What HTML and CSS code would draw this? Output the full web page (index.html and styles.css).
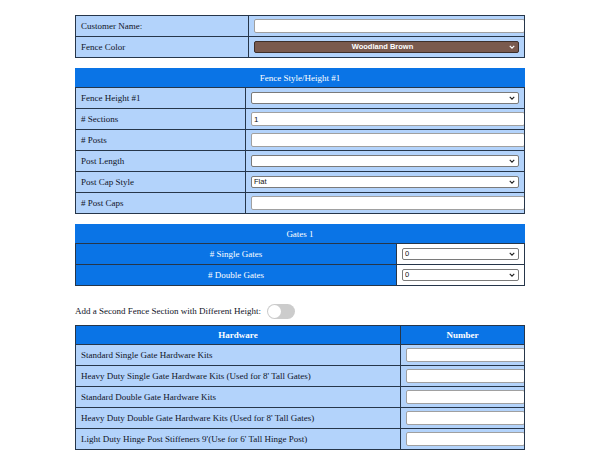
FILE: index.html
```html
<!DOCTYPE html>
<html>
<head>
<meta charset="utf-8">
<link rel="stylesheet" href="styles.css">
</head>
<body>
<div class="page">
  <table class="grid t1">
    <colgroup><col class="k1"><col></colgroup>
    <tr>
      <td class="label">Customer Name:</td>
      <td class="field"><input type="text" class="txt"></td>
    </tr>
    <tr>
      <td class="label">Fence Color</td>
      <td class="field"><span class="selwrap brownwrap"><select class="sel brown"><option>Woodland Brown</option></select><svg class="chev" viewBox="0 0 8 5" width="6" height="4"><path d="M1 1 L4 4 L7 1" fill="none" stroke="#ffffff" stroke-width="1.6"/></svg></span></td>
    </tr>
  </table>

  <table class="grid t2">
    <colgroup><col class="k2"><col></colgroup>
    <tr><th class="head" colspan="2">Fence Style/Height #1</th></tr>
    <tr>
      <td class="label">Fence Height #1</td>
      <td class="field"><span class="selwrap"><select class="sel"><option></option></select><svg class="chev" viewBox="0 0 8 5" width="6" height="4"><path d="M1 1 L4 4 L7 1" fill="none" stroke="#222" stroke-width="1.6"/></svg></span></td>
    </tr>
    <tr>
      <td class="label"># Sections</td>
      <td class="field"><input type="text" class="txt" value="1"></td>
    </tr>
    <tr>
      <td class="label"># Posts</td>
      <td class="field"><input type="text" class="txt"></td>
    </tr>
    <tr>
      <td class="label">Post Length</td>
      <td class="field"><span class="selwrap"><select class="sel"><option></option></select><svg class="chev" viewBox="0 0 8 5" width="6" height="4"><path d="M1 1 L4 4 L7 1" fill="none" stroke="#222" stroke-width="1.6"/></svg></span></td>
    </tr>
    <tr>
      <td class="label">Post Cap Style</td>
      <td class="field"><span class="selwrap"><select class="sel"><option>Flat</option></select><svg class="chev" viewBox="0 0 8 5" width="6" height="4"><path d="M1 1 L4 4 L7 1" fill="none" stroke="#222" stroke-width="1.6"/></svg></span></td>
    </tr>
    <tr>
      <td class="label"># Post Caps</td>
      <td class="field"><input type="text" class="txt"></td>
    </tr>
  </table>

  <table class="grid t3">
    <colgroup><col class="k3"><col></colgroup>
    <tr><th class="head" colspan="2">Gates 1</th></tr>
    <tr>
      <td class="blue"># Single Gates</td>
      <td class="field white"><span class="selwrap"><select class="sel"><option>0</option></select><svg class="chev" viewBox="0 0 8 5" width="6" height="4"><path d="M1 1 L4 4 L7 1" fill="none" stroke="#222" stroke-width="1.6"/></svg></span></td>
    </tr>
    <tr>
      <td class="blue"># Double Gates</td>
      <td class="field white"><span class="selwrap"><select class="sel"><option>0</option></select><svg class="chev" viewBox="0 0 8 5" width="6" height="4"><path d="M1 1 L4 4 L7 1" fill="none" stroke="#222" stroke-width="1.6"/></svg></span></td>
    </tr>
  </table>

  <div class="toggle-row">
    <span class="toggle-label">Add a Second Fence Section with Different Height:</span>
    <span class="switch"><span class="knob"></span></span>
  </div>

  <table class="grid t4">
    <colgroup><col class="k4"><col></colgroup>
    <tr>
      <th class="head bold">Hardware</th>
      <th class="head bold">Number</th>
    </tr>
    <tr>
      <td class="label">Standard Single Gate Hardware Kits</td>
      <td class="field"><input type="text" class="txt"></td>
    </tr>
    <tr>
      <td class="label">Heavy Duty Single Gate Hardware Kits (Used for 8' Tall Gates)</td>
      <td class="field"><input type="text" class="txt"></td>
    </tr>
    <tr>
      <td class="label">Standard Double Gate Hardware Kits</td>
      <td class="field"><input type="text" class="txt"></td>
    </tr>
    <tr>
      <td class="label">Heavy Duty Double Gate Hardware Kits (Used for 8' Tall Gates)</td>
      <td class="field"><input type="text" class="txt"></td>
    </tr>
    <tr>
      <td class="label">Light Duty Hinge Post Stiffeners 9'(Use for 6' Tall Hinge Post)</td>
      <td class="field"><input type="text" class="txt"></td>
    </tr>
  </table>
</div>
</body>
</html>
```
FILE: styles.css
```css
html, body {
  margin: 0;
  padding: 0;
  background: #ffffff;
}

.page {
  width: 450px;
  margin: 15px auto 0;
  font-family: "Liberation Serif", "Times New Roman", serif;
  font-size: 9px;
  color: #101428;
}

.grid {
  width: 100%;
  border-collapse: collapse;
  table-layout: fixed;
  margin-bottom: 10px;
  font-size: 9px;
}

.grid td,
.grid th {
  border: 1px solid #26364a;
  height: 20px;
  padding: 0 5px;
  vertical-align: middle;
}

.grid .head {
  height: 18px;
}

.k1 { width: 173px; }
.k2 { width: 170px; }
.k3 { width: 321px; }
.k4 { width: 325px; }

.label {
  background: #b3d3fb;
  text-align: left;
}

.field {
  background: #b3d3fb;
}

.field.white {
  background: #ffffff;
}

.head {
  background: #0a74e6;
  color: #ffffff;
  font-weight: normal;
  text-align: center;
}

.t2 .head,
.t3 .head {
  border-color: #0a74e6;
  border-bottom-color: #26364a;
}

.head.bold {
  font-weight: bold;
}

.blue {
  background: #0a74e6;
  color: #ffffff;
  text-align: center;
}

.txt {
  display: block;
  width: 100%;
  height: 10px;
  padding: 1px 2px;
  margin: 0;
  border: 1px solid #a0a0a0;
  border-radius: 2px;
  background: #ffffff;
  font-family: "Liberation Sans", Arial, sans-serif;
  font-size: 8px;
  color: #111;
  outline: none;
}

.selwrap {
  position: relative;
  display: block;
}

.sel {
  display: block;
  width: 100%;
  height: 12px;
  padding: 0 10px 0 2px;
  margin: 0;
  border: 1px solid #7a7a7a;
  border-radius: 2px;
  background: #ffffff;
  font-family: "Liberation Sans", Arial, sans-serif;
  font-size: 7.5px;
  line-height: 10px;
  color: #111;
  -webkit-appearance: none;
  appearance: none;
}

.chev {
  position: absolute;
  right: 4px;
  top: 4px;
  pointer-events: none;
}

.sel.brown {
  background: #7a5a4e;
  color: #ffffff;
  font-weight: bold;
  text-align: center;
  text-align-last: center;
  border-color: #3e2f2a;
}

.toggle-row {
  display: flex;
  align-items: center;
  gap: 6px;
  height: 16px;
  margin: 17px 0 6px;
}

.toggle-label {
  font-size: 9px;
  color: #101428;
}

.switch {
  position: relative;
  display: inline-block;
  width: 28px;
  height: 15px;
  border-radius: 8px;
  background: #cccccc;
}

.knob {
  position: absolute;
  left: 1px;
  top: 1px;
  width: 13px;
  height: 13px;
  border-radius: 50%;
  background: #ffffff;
}
```
